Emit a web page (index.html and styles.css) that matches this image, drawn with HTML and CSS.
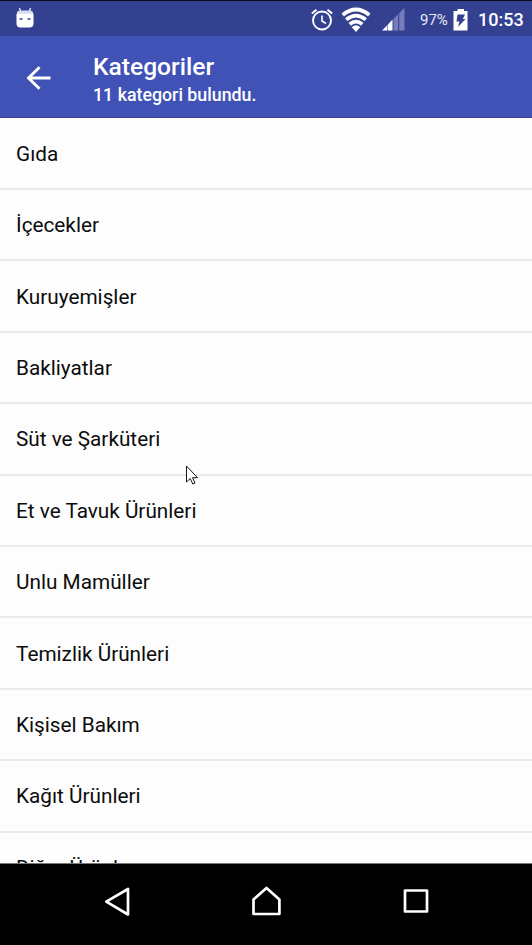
FILE: index.html
```html
<!DOCTYPE html>
<html lang="tr">
<head>
<meta charset="utf-8">
<title>Kategoriler</title>
<link rel="stylesheet" href="styles.css">
</head>
<body>
<div class="phone">
  <div class="status-bar">
    <svg class="robot" width="20" height="22" viewBox="0 0 20 22">
      <path d="M4.500 1l1 3M15.500 1l-1 3" stroke="#fff" stroke-width="1.200"/>
      <path d="M2 6q0-2.500 3-2.500h10q3 0 3 2.500v1H2z" fill="#d9ddf2"/>
      <path d="M1.500 6.800h17v9.700q0 4-4 4h-9q-4 0-4-4z" fill="#fff"/>
      <path d="M4.500 12h3M12.500 12h3" stroke="#344090" stroke-width="1.700"/>
    </svg>
    <svg class="alarm" width="22" height="22" viewBox="0 0 22 22" fill="none" stroke="#fff">
      <circle cx="11" cy="11.500" r="9" stroke-width="1.900"/>
      <path d="M11 6.500v5.500l4 2.500" stroke-width="1.600"/>
      <path d="M.8 4.500L5.500.7M21.200 4.500L16.500.7" stroke-width="1.900"/>
    </svg>
    <svg class="wifi" width="30" height="26" viewBox="0 0 30 26" fill="none" stroke="#fff" stroke-width="3.700">
      <path d="M1.700 8Q15-3 28.300 8M5.200 12.600Q15 4.500 24.800 12.600M8.700 17.200Q15 12 21.300 17.200"/>
      <path d="M10.800 20.200Q15 16.500 19.200 20.200L15 25z" fill="#fff" stroke="none"/>
    </svg>
    <svg class="signal" width="24" height="23" viewBox="0 0 24 23">
      <path d="M0 22.500l5-5v5zM5.500 17l5-5.500v11h-5z" fill="#fff"/>
      <path d="M11.500 11l4.700-5v16.500h-4.700zM17.200 5L22.500 0v22.500h-5.300z" fill="#757dba"/>
    </svg>
    <span class="percent">97%</span>
    <svg class="battery" width="16" height="22" viewBox="0 0 16 22">
      <path d="M4.500 0h6.500v2h3.500v19.500H.5V2h4z" fill="#fff"/>
      <path d="M4.500 5.500H12L9.800 10h2.700L5 18l1.500-5.500h-3z" fill="#344090"/>
    </svg>
    <span class="clock">10:53</span>
  </div>
  <header class="toolbar">
    <svg class="back" width="26" height="24" viewBox="0 0 26 24" fill="none" stroke="#fff" stroke-width="2.900">
      <path d="M24.500 12H3M13.500 1.200L2.500 12l11 10.800"/>
    </svg>
    <div class="titles">
      <h1 class="title">Kategoriler</h1>
      <p class="subtitle">11 kategori bulundu.</p>
    </div>
  </header>
  <ul class="list">
    <li class="row">Gıda</li>
    <li class="row">İçecekler</li>
    <li class="row">Kuruyemişler</li>
    <li class="row">Bakliyatlar</li>
    <li class="row">Süt ve Şarküteri</li>
    <li class="row">Et ve Tavuk Ürünleri</li>
    <li class="row">Unlu Mamüller</li>
    <li class="row">Temizlik Ürünleri</li>
    <li class="row">Kişisel Bakım</li>
    <li class="row">Kağıt Ürünleri</li>
    <li class="row">Diğer Ürünler</li>
  </ul>
  <nav class="nav-bar">
    <svg width="28" height="30" viewBox="0 0 28 30" fill="none" stroke="#fff" stroke-width="2.700" stroke-linejoin="round"><path d="M25 3v25.500L3.300 15.700z"/></svg>
    <svg width="30" height="30" viewBox="0 0 30 30" fill="none" stroke="#fff" stroke-width="2.700" stroke-linejoin="round"><path d="M14.500 2l12.900 11.500v14.500H1.500V13.500z"/></svg>
    <svg width="28" height="28" viewBox="0 0 28 28" fill="none" stroke="#fff" stroke-width="2.700" stroke-linejoin="round"><path d="M3 3.500h22v21H3z"/></svg>
  </nav>
  <svg class="cursor" width="14" height="21" viewBox="0 0 14 21">
    <path d="M.5 1v16l3.700-3.500 2.600 5.500 2.200-1-2.500-5.300h5z" fill="#fff" stroke="#14141c"/>
  </svg>
</div>
</body>
</html>
```
FILE: styles.css
```css
* { box-sizing: border-box; }
body { margin: 0; font-family: Roboto, sans-serif; }
.phone {
  position: relative;
  display: flex;
  flex-direction: column;
  height: 945px;
  overflow: hidden;
  background: #fdfdfd;
}
svg { display: block; flex: none; }
.status-bar {
  display: flex;
  align-items: center;
  flex: none;
  height: 36px;
  padding: 2px 9px 0 15px;
  border-top: 1px solid #080a18;
  background: #344090;
  color: #fff;
}
.robot { margin-top: -4px; }
.alarm { margin-left: auto; }
.wifi { margin-left: 8px; }
.signal { margin-left: 11px; }
.percent { width: 29px; margin-left: 14px; font-size: 15px; color: #e6e8f5; }
.battery { margin-left: 4px; }
.clock { width: 45px; margin-left: 9px; font-size: 18px; font-weight: 500; white-space: nowrap; }
.toolbar {
  display: flex;
  align-items: center;
  flex: none;
  height: 82px;
  padding: 2px 26px 0;
  border-bottom: 1px solid #37459b;
  background: #4052b5;
  color: #fff;
}
.titles { margin-left: 41px; padding-top: 4px; }
.title { margin: 0; font-size: 24.600px; font-weight: 500; line-height: 30px; }
.subtitle { margin: 0; font-size: 17.800px; font-weight: 500; line-height: 25px; }
.list {
  flex: 1;
  min-height: 0;
  margin: 0;
  padding: .5px 0 0;
  overflow: hidden;
  list-style: none;
}
.row {
  display: flex;
  align-items: center;
  height: 71.420px;
  padding: 1px 0 0 16px;
  border-bottom: 2px solid #ebebeb;
  color: #0c0c0c;
  font-size: 20.750px;
}
.nav-bar {
  display: flex;
  align-items: center;
  justify-content: space-between;
  flex: none;
  height: 82px;
  padding: 0 102px 8px 103px;
  border-top: 1px solid #777;
  background: #000;
}
.cursor { position: absolute; left: 186px; top: 465px; }
```
